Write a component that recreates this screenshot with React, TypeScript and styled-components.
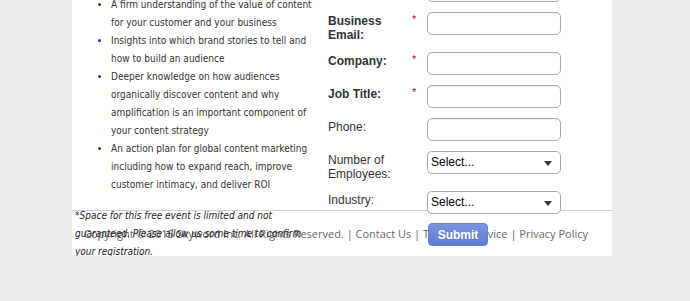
import React from 'react';
import styled, { createGlobalStyle } from 'styled-components';

const GlobalStyle = createGlobalStyle`
  html, body {
    margin: 0;
    padding: 0;
    background: #ebebeb;
    overflow: hidden;
  }
`;

const Panel = styled.div`
  margin: -30px 0 0 72px;
  width: 540px;
  background: #ffffff;
`;

const Content = styled.div`
  position: relative;
  z-index: 1;
  height: 240px;
  display: grid;
  grid-template-columns: 240px 1fr;
  column-gap: 13px;
  padding-left: 3px;
`;

const LeftColumn = styled.div`
  font-family: 'DejaVu Sans Condensed', 'DejaVu Sans', Verdana, sans-serif;
  font-size: 10px;
  color: #333;
`;

const BenefitList = styled.ul`
  margin: 0;
  padding: 26px 0 0 36px;
  list-style: disc;
`;

const Benefit = styled.li`
  line-height: 18px;
  white-space: nowrap;
`;

const Disclaimer = styled.p`
  margin: 13px 0 0;
  font-style: italic;
  line-height: 18px;
  white-space: nowrap;
  color: #222;
`;

const Form = styled.form`
  padding-top: 9px;
  display: flex;
  flex-direction: column;
  gap: 10px;
  font-family: 'Liberation Sans', Arial, sans-serif;
  font-size: 12px;
  color: #333;
`;

const Row = styled.div`
  display: grid;
  grid-template-columns: 86px 13px 134px;
  align-items: start;
`;

const Label = styled.label<{ $required?: boolean }>`
  padding-top: 2px;
  line-height: 14px;
  font-weight: ${(p) => (p.$required ? 'bold' : 'normal')};
`;

const Star = styled.span`
  color: #a31515;
  font-size: 11px;
  line-height: 12px;
  padding-top: 1px;
  margin-left: -2px;
`;

const TextInput = styled.input`
  box-sizing: border-box;
  width: 134px;
  height: 23px;
  margin: 0;
  border: 1px solid #a9a9ad;
  border-radius: 5px;
  background: #fff;
  box-shadow: inset 0 1px 1px rgba(0, 0, 0, 0.06);
  outline: none;
`;

const SelectWrap = styled.div`
  position: relative;
  width: 134px;
  height: 23px;

  &::after {
    content: '';
    position: absolute;
    right: 9px;
    top: 10px;
    border-left: 4px solid transparent;
    border-right: 4px solid transparent;
    border-top: 5px solid #333;
    pointer-events: none;
  }
`;

const Select = styled.select`
  appearance: none;
  -webkit-appearance: none;
  box-sizing: border-box;
  width: 134px;
  height: 23px;
  margin: 0;
  padding: 0 0 2px 3px;
  border: 1px solid #a9a9ad;
  border-radius: 5px;
  background: #fff;
  font-family: 'Liberation Sans', Arial, sans-serif;
  font-size: 12px;
  color: #000;
  outline: none;
`;

const SubmitButton = styled.button`
  box-sizing: border-box;
  width: 60px;
  height: 23px;
  margin: -1px 0 0 1px;
  padding: 0;
  border: 1px solid #6480cf;
  border-radius: 4px;
  background: linear-gradient(#7a95de, #5d7cd1);
  color: #fff;
  font-family: 'Liberation Sans', Arial, sans-serif;
  font-size: 12px;
  font-weight: bold;
`;

const Footer = styled.footer`
  border-top: 1px solid #cfcfcf;
  height: 45px;
  text-align: center;
  font-family: 'Open Sans', sans-serif;
  font-size: 11px;
  line-height: 16px;
  color: #666;
`;

const FooterText = styled.p`
  margin: 0;
  padding: 15px 12px 0 0;
`;

type Field = {
  label: React.ReactNode;
  required?: boolean;
  select?: boolean;
};

// first row sits above the visible area, only its input's bottom edge shows
const fields: Field[] = [
  { label: 'Last Name:', required: true },
  { label: <>Business<br />Email:</>, required: true },
  { label: 'Company:', required: true },
  { label: 'Job Title:', required: true },
  { label: 'Phone:' },
  { label: <>Number of<br />Employees:</>, select: true },
  { label: 'Industry:', select: true },
];

const benefits: React.ReactNode[] = [
  <>A firm understanding of the value of content<br />for your customer and your business</>,
  <>Insights into which brand stories to tell and<br />how to build an audience</>,
  <>Deeper knowledge on how audiences<br />organically discover content and why<br />amplification is an important component of<br />your content strategy</>,
  <>An action plan for global content marketing<br />including how to expand reach, improve<br />customer intimacy, and deliver ROI</>,
];

export default function App() {
  return (
    <>
      <GlobalStyle />
      <Panel>
        <Content>
          <LeftColumn>
            <BenefitList>
              {benefits.map((b, i) => (
                <Benefit key={i}>{b}</Benefit>
              ))}
            </BenefitList>
            <Disclaimer>
              *Space for this free event is limited and not
              <br />
              guaranteed. Please allow us some time to confirm
              <br />
              your registration.
            </Disclaimer>
          </LeftColumn>
          <Form onSubmit={(e) => e.preventDefault()}>
            {fields.map((f, i) => (
              <Row key={i}>
                <Label $required={f.required}>{f.label}</Label>
                <Star>{f.required ? '*' : ''}</Star>
                {f.select ? (
                  <SelectWrap>
                    <Select defaultValue="">
                      <option value="">Select...</option>
                    </Select>
                  </SelectWrap>
                ) : (
                  <TextInput type="text" />
                )}
              </Row>
            ))}
            <Row>
              <span />
              <span />
              <SubmitButton type="submit">Submit</SubmitButton>
            </Row>
          </Form>
        </Content>
        <Footer>
          <FooterText>
            Copyright © 2015 Skyword Inc. All Rights Reserved. | Contact Us | Terms of Service | Privacy Policy
          </FooterText>
        </Footer>
      </Panel>
    </>
  );
}
